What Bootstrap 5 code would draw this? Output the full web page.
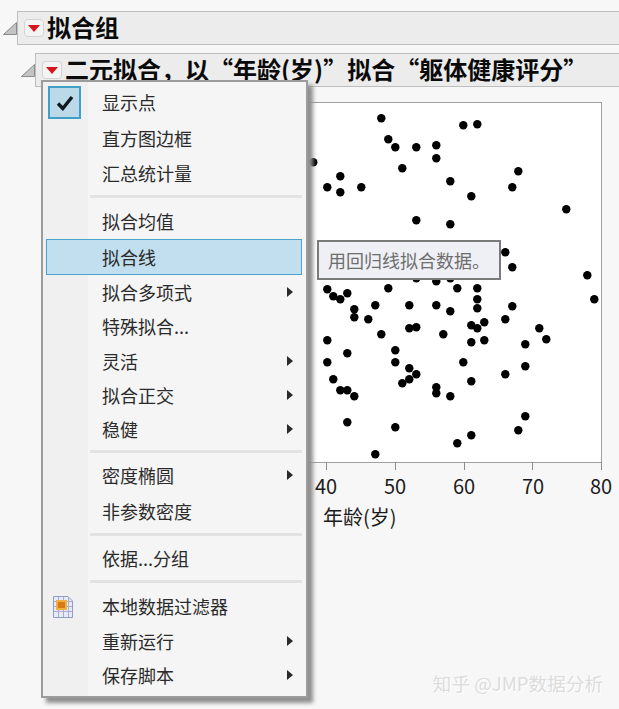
<!DOCTYPE html>
<html lang="zh-CN">

<head>
    <meta charset="UTF-8">
    <meta name="viewport" content="width=device-width, initial-scale=1.0">
    <title>拟合组</title>
    <link href="https://cdn.jsdelivr.net/npm/bootstrap@5.3.0/dist/css/bootstrap.min.css" rel="stylesheet">
    <style>
        body {
            background-color: #f7f7f7;
            color: #1c1c1c;
            font-family: "Noto Sans CJK SC", "Liberation Sans", sans-serif;
            height: 709px;
            overflow: hidden;
        }

        .report-page {
            height: 709px;
            padding-top: 11px;
            position: relative;
        }

        .outline-row {
            height: 34px;
        }

        .outline-row + .outline-row {
            margin-top: 8px;
            margin-left: 18px;
        }

        .disclosure {
            width: 17px;
            flex: none;
            padding-left: 3px;
        }

        .outline-bar {
            flex: 1;
            height: 34px;
            background-color: #ececec;
            border: 1px solid #bdbdbd;
            border-right: 0;
            padding-left: 6px;
            gap: 3px;
        }

        .red-btn {
            width: 20px;
            height: 18px;
            flex: none;
            border: 1px solid #d4d4d4;
            border-radius: 4px;
            background-color: #f4f4f4;
        }

        .outline-title {
            font-size: 24px;
            font-weight: 700;
            line-height: 32px;
            color: #0a0a0a;
            white-space: nowrap;
            padding-bottom: 2px;
        }

        .plot-wrap {
            margin-top: 1px;
            margin-left: 300px;
            line-height: 0;
        }

        .plot-wrap text {
            font-family: "Noto Sans CJK SC", "Liberation Sans", sans-serif;
            fill: #1c1c1c;
        }

        .fit-menu.dropdown-menu {
            left: 41px;
            top: 80px;
            width: 267px;
            height: 618px;
            padding: 0;
            border: 2px solid #9c9c9c;
            border-radius: 0;
            background-color: #f5f5f5;
            box-shadow: 5px 5px 4px #8f8f8f;
            font-size: 18px;
            overflow: hidden;
        }

        .menu-gutter {
            position: absolute;
            left: 0;
            top: 0;
            bottom: 0;
            width: 45px;
            background-color: #f0f0f0;
        }

        .fit-menu .dropdown-item {
            position: relative;
            height: 35px;
            line-height: 33px;
            padding: 0 6px 0 55px;
            color: #2a2a2a;
            border: 1px solid transparent;
            margin: 0 4px 0 3px;
            width: auto;
        }

        .fit-menu .dropdown-item.tall {
            height: 36px;
            line-height: 34px;
        }

        .fit-menu .dropdown-item.short {
            height: 34px;
            line-height: 32px;
        }

        .fit-menu .dropdown-item.hilite {
            background-color: #c1dfee;
            border-color: #4aa3cb;
        }

        .fit-menu .dropdown-divider {
            position: relative;
            margin: 4px 4px 5px 47px;
            border-top: 3px solid #e2e2e2;
            opacity: 1;
        }

        .first-row {
            margin-top: 2px !important;
        }

        .check-box {
            position: absolute;
            left: 1px;
            top: 1px;
            width: 33px;
            height: 33px;
            background-color: #bcd9ea;
            border: 2px solid #3f9fc6;
        }

        .menu-icon {
            position: absolute;
            left: 6px;
            top: 7px;
        }

        .sub-arrow {
            position: absolute;
            right: 8px;
            top: 11px;
            width: 0;
            height: 0;
            border-left: 6px solid #2a2a2a;
            border-top: 5px solid transparent;
            border-bottom: 5px solid transparent;
        }

        .fit-tip {
            position: absolute;
            left: 317px;
            top: 240px;
            width: 184px;
            height: 40px;
            background-color: #eef0f5;
            border: 2px solid #7a7a7a;
            color: #6e6e6e;
            font-size: 18px;
            line-height: 36px;
            padding-left: 9px;
            white-space: nowrap;
        }

        .watermark {
            position: absolute;
            right: 16px;
            bottom: 13px;
            font-size: 18.6px;
            line-height: 26px;
            color: #dcdcdc;
            text-shadow: 1px 1px 0 #ffffff;
        }
    </style>
</head>

<body>
    <div class="report-page">
        <div class="outline-row d-flex align-items-center">
            <div class="disclosure d-flex align-items-center">
                <svg width="14" height="13" viewBox="0 0 14 13"><path d="M13.5 .5V12.5H.5Z" fill="#c4c4c4" stroke="#8a8a8a"/></svg>
            </div>
            <div class="outline-bar d-flex align-items-center">
                <span class="red-btn d-flex align-items-center justify-content-center">
                    <svg width="12" height="7" viewBox="0 0 12 7"><path d="M0 0H12L6 7Z" fill="#d8141c"/></svg>
                </span>
                <span class="outline-title">拟合组</span>
            </div>
        </div>
        <div class="outline-row d-flex align-items-center">
            <div class="disclosure d-flex align-items-center">
                <svg width="14" height="13" viewBox="0 0 14 13"><path d="M13.5 .5V12.5H.5Z" fill="#c4c4c4" stroke="#8a8a8a"/></svg>
            </div>
            <div class="outline-bar d-flex align-items-center">
                <span class="red-btn d-flex align-items-center justify-content-center">
                    <svg width="12" height="7" viewBox="0 0 12 7"><path d="M0 0H12L6 7Z" fill="#d8141c"/></svg>
                </span>
                <span class="outline-title">二元拟合，以“年龄(岁)”拟合“躯体健康评分”</span>
            </div>
        </div>

        <div class="plot-wrap">
            <svg id="plot" width="319" height="445" viewBox="300 88 319 445">
                <rect x="280" y="102.5" width="321.5" height="360" fill="#fff" stroke="#a0a0a0"/>
                <g stroke="#8c8c8c">
                    <path d="M326.5 462V470M395.5 462V470M464.5 462V470M532.5 462V470M601.5 462V470"/>
                </g>
                <g font-size="20" text-anchor="middle">
                    <text x="326" y="494">40</text>
                    <text x="395" y="494">50</text>
                    <text x="464" y="494">60</text>
                    <text x="533" y="494">70</text>
                    <text x="601" y="494">80</text>
                </g>
                <text x="323" y="525" font-size="20">年龄(岁)</text>
                <g id="dots" fill="#000"></g>
            </svg>
        </div>

        <div class="dropdown-menu show fit-menu">
            <div class="menu-gutter"></div>
            <a class="dropdown-item tall first-row" href="#">
                <span class="check-box d-flex align-items-center justify-content-center">
                    <svg width="18" height="16" viewBox="0 0 18 16"><path d="M2 8.5L6.8 13.5L16 2" fill="none" stroke="#101820" stroke-width="3.4"/></svg>
                </span>显示点</a>
            <a class="dropdown-item tall" href="#">直方图边框</a>
            <a class="dropdown-item" href="#">汇总统计量</a>
            <div class="dropdown-divider"></div>
            <a class="dropdown-item tall" href="#">拟合均值</a>
            <a class="dropdown-item hilite tall" href="#">拟合线</a>
            <a class="dropdown-item short" href="#">拟合多项式<span class="sub-arrow"></span></a>
            <a class="dropdown-item" href="#">特殊拟合...</a>
            <a class="dropdown-item short" href="#">灵活<span class="sub-arrow"></span></a>
            <a class="dropdown-item short" href="#">拟合正交<span class="sub-arrow"></span></a>
            <a class="dropdown-item short" href="#">稳健<span class="sub-arrow"></span></a>
            <div class="dropdown-divider"></div>
            <a class="dropdown-item" href="#">密度椭圆<span class="sub-arrow"></span></a>
            <a class="dropdown-item tall" href="#">非参数密度</a>
            <div class="dropdown-divider"></div>
            <a class="dropdown-item" href="#">依据...分组</a>
            <div class="dropdown-divider"></div>
            <a class="dropdown-item tall" href="#">
                <svg class="menu-icon" width="20" height="22" viewBox="0 0 20 22">
                    <path d="M.5 .5H15L19.5 5V21.5H.5Z" fill="#e6ebf8" stroke="#8f9cc6"/>
                    <path d="M1 5.5H19M1 10.5H19M1 15.5H19M5.5 1V21M10.5 1V21M15.5 1V21" stroke="#b0a8d4"/>
                    <rect x="3" y="4" width="11" height="10" fill="#eeb040"/>
                    <rect x="5" y="6" width="7" height="6" fill="#d87a18"/>
                </svg>本地数据过滤器</a>
            <a class="dropdown-item short" href="#">重新运行<span class="sub-arrow"></span></a>
            <a class="dropdown-item short" href="#">保存脚本<span class="sub-arrow"></span></a>
        </div>

        <div class="fit-tip">用回归线拟合数据。</div>
        <div class="watermark">知乎 @JMP数据分析</div>
    </div>

    <script src="https://cdn.jsdelivr.net/npm/bootstrap@5.3.0/dist/js/bootstrap.bundle.min.js"></script>
    <script>
        // 散点坐标 (屏幕像素)
        const points = [
            [381,118],[463,125],[477,124],[388,139],[395,147],[416,147],[436,145],[436,158],[402,168],[518,171],
            [313,162],[340,176],[327,187],[340,192],[361,187],[450,181],[512,187],[471,196],[566,209],[416,220],
            [450,224],[505,252],[512,267],[587,275],[416,278],[436,281],[450,278],[327,289],[333,296],[340,299],
            [347,293],[388,288],[457,288],[477,288],[477,299],[477,308],[594,299],[354,309],[354,317],[375,305],
            [409,305],[436,305],[450,311],[512,306],[368,319],[505,319],[484,322],[471,325],[477,328],[409,328],
            [416,327],[381,334],[443,334],[539,328],[546,339],[484,340],[471,342],[525,344],[327,340],[395,350],
            [347,353],[327,362],[395,362],[463,362],[525,366],[409,368],[416,374],[505,374],[333,379],[409,379],
            [402,383],[471,381],[340,390],[347,390],[354,396],[436,387],[436,393],[450,396],[347,422],[395,427],
            [525,416],[518,430],[471,435],[457,443],[375,454]
        ];
        const dots = document.querySelector("#dots");
        points.forEach(p => {
            const c = document.createElementNS("http://www.w3.org/2000/svg", "circle");
            c.setAttribute("cx", p[0] + 0.3);
            c.setAttribute("cy", p[1] + 0.2);
            c.setAttribute("r", 4.2);
            dots.appendChild(c);
        });
    </script>
</body>

</html>
